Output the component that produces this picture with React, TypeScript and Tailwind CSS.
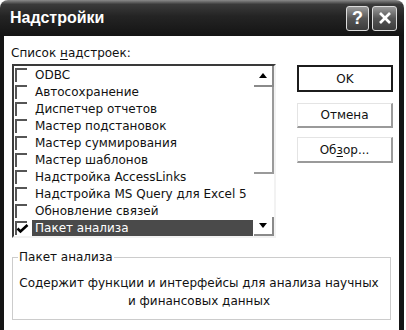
import React from "react";

const items = [
  "ODBC",
  "Автосохранение",
  "Диспетчер отчетов",
  "Мастер подстановок",
  "Мастер суммирования",
  "Мастер шаблонов",
  "Надстройка AccessLinks",
  "Надстройка MS Query для Excel 5",
  "Обновление связей",
  "Пакет анализа",
];

function Row({ label, checked }: { label: string; checked: boolean }) {
  return (
    <div className="flex h-[17px] items-center">
      <div className="relative ml-[1px] h-[14px] w-[12px] shrink-0 border-l-2 border-t-2 border-[#555]">
        {checked && (
          <svg className="absolute left-[-1px] top-[1px]" width="13" height="10" viewBox="0 0 13 10">
            <polyline points="1.5,4.5 4.5,7.5 11.5,1" fill="none" stroke="#000" strokeWidth="2.6" />
          </svg>
        )}
      </div>
      <div
        className={
          checked
            ? "ml-[5px] mr-[1px] flex h-[16px] flex-1 items-center bg-[#4a4a4a] pl-[3px] text-white"
            : "ml-[5px] flex h-[16px] flex-1 items-center pl-[3px] text-[#111]"
        }
      >
        {label}
      </div>
    </div>
  );
}

function Arrow({ up }: { up: boolean }) {
  return (
    <svg width="8" height="5" viewBox="0 0 8 5">
      {up ? <polygon points="0,5 8,5 4,0" fill="#000" /> : <polygon points="0,0 8,0 4,5" fill="#000" />}
    </svg>
  );
}

export default function App() {
  return (
    <div className="h-[330px] w-[406px] overflow-hidden bg-white" style={{ fontFamily: '"DejaVu Sans", sans-serif' }}>
      <div className="flex h-[330px] w-[404px] flex-col">
        {/* Title bar */}
        <div className="flex h-[36px] shrink-0 items-center rounded-t-[8px] bg-[linear-gradient(to_bottom,#8a8a8a_0%,#3a3a3a_12%,#242424_45%,#141414_100%)] pl-[10px] pr-[7px]">
          <div
            className="flex-1 text-[16px] font-bold leading-none text-white"
            style={{ fontFamily: '"Liberation Sans", sans-serif' }}
          >
            Надстройки
          </div>
          <div className="flex gap-[3px]">
            <div className="flex h-[25px] w-[23px] items-center justify-center rounded-[3px] border border-[#dcdcdc] bg-[linear-gradient(to_bottom,#9a9a9a,#555_50%,#3c3c3c)]">
              <span className="text-[18px] font-bold leading-none text-white" style={{ fontFamily: '"Liberation Sans", sans-serif' }}>
                ?
              </span>
            </div>
            <div className="flex h-[25px] w-[25px] items-center justify-center rounded-[3px] border border-[#dcdcdc] bg-[linear-gradient(to_bottom,#9a9a9a,#555_50%,#3c3c3c)]">
              <svg width="14" height="14" viewBox="0 0 14 14">
                <line x1="2" y1="2" x2="12" y2="12" stroke="#fff" strokeWidth="2.6" />
                <line x1="12" y1="2" x2="2" y2="12" stroke="#fff" strokeWidth="2.6" />
              </svg>
            </div>
          </div>
        </div>

        {/* Body */}
        <div className="flex flex-1 flex-col border-l-4 border-r-[5px] border-[#151515] bg-white text-[12px] text-[#111]">
          <div className="h-[14px] pl-[7px] pt-[0px] leading-[14px] mt-[10px]">
            Список <span className="underline underline-offset-2">н</span>адстроек:
          </div>

          <div className="ml-[8px] mt-[4px] flex">
            {/* Listbox */}
            <div className="flex h-[174px] w-[264px] border-2 border-b-[#f2f2f2] border-l-[#3a3a3a] border-r-[#f2f2f2] border-t-[#3a3a3a]">
              <div className="flex w-[240px] flex-col">
                {items.map((it, i) => (
                  <Row key={it} label={it} checked={i === items.length - 1} />
                ))}
              </div>
              <div className="flex w-[20px] flex-col">
                <div className="flex h-[21px] items-center justify-center border-b-2 border-r-2 border-[#8a8a8a]">
                  <Arrow up />
                </div>
                <div className="h-[87px] border-b-2 border-r-2 border-[#9a9a9a]" />
                <div className="flex-1" />
                <div className="flex h-[19px] items-center justify-center border-b-2 border-r-2 border-[#8a8a8a]">
                  <Arrow up={false} />
                </div>
              </div>
            </div>

            {/* Buttons */}
            <div className="ml-[21px] mt-[1px] flex w-[96px] flex-col">
              <div className="flex h-[27px] items-center justify-center border-2 border-[#1c1c1c]">OK</div>
              <div className="mt-[11px] flex h-[25px] items-center justify-center border-b-2 border-l border-r-2 border-t border-b-[#9a9a9a] border-l-[#e4e4e4] border-r-[#9a9a9a] border-t-[#e4e4e4]">
                Отмена
              </div>
              <div className="mt-[9px] flex h-[26px] items-center justify-center border-b-2 border-l border-r-2 border-t border-b-[#9a9a9a] border-l-[#e4e4e4] border-r-[#9a9a9a] border-t-[#e4e4e4]">
                Об<span className="underline underline-offset-2">з</span>ор...
              </div>
            </div>
          </div>

          {/* Group box */}
          <fieldset className="ml-[8px] mt-[12px] h-[70px] w-[379px] border border-[#cccccc] pr-[5px]">
            <legend className="ml-[5px] px-[1px] leading-[14px]">Пакет анализа</legend>
            <div className="pt-[10px] text-center leading-[18px]">
              Содержит функции и интерфейсы для анализа научных
              <br />и финансовых данных
            </div>
          </fieldset>
        </div>
      </div>
    </div>
  );
}
